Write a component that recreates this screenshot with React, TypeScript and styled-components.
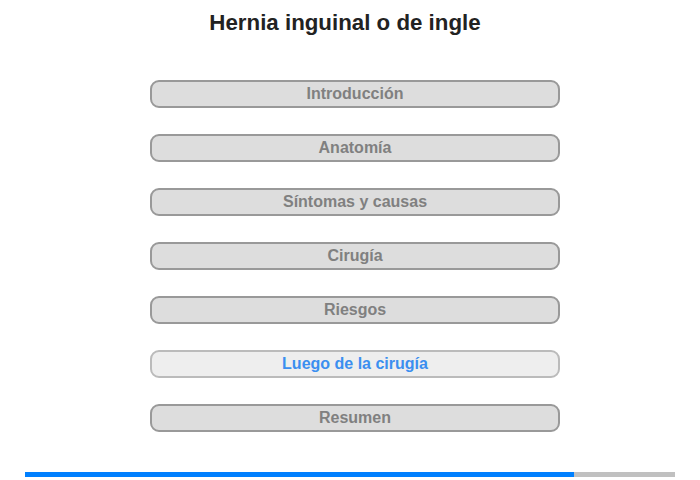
import styled, { createGlobalStyle } from 'styled-components';

const GlobalStyle = createGlobalStyle`
  html, body {
    margin: 0;
    padding: 0;
    background: #ffffff;
    font-family: "Liberation Sans", Arial, sans-serif;
  }
`;

const Page = styled.div`
  width: 700px;
  height: 480px;
  display: flex;
  flex-direction: column;
`;

const Title = styled.h1`
  margin: 10px 0 0 0;
  text-align: center;
  font-size: 22.3px;
  line-height: 26px;
  font-weight: 700;
  color: #222222;
  transform: translateX(-5px);
`;

const Menu = styled.nav`
  margin: 44px 0 0 150px;
  width: 410px;
  display: flex;
  flex-direction: column;
  gap: 26px;
`;

const MenuButton = styled.button<{ $active?: boolean }>`
  box-sizing: border-box;
  height: 28px;
  width: 100%;
  padding: 0;
  border-radius: 9px;
  border: 2px solid ${({ $active }) => ($active ? '#bbbbbb' : '#999999')};
  background: ${({ $active }) => ($active ? '#eeeeee' : '#dddddd')};
  color: ${({ $active }) => ($active ? '#3b8ff0' : '#808080')};
  font-family: "Liberation Sans", Arial, sans-serif;
  font-size: 16px;
  font-weight: 700;
  line-height: 24px;
  text-align: center;
  cursor: pointer;
`;

const Progress = styled.div`
  margin: auto 25px 3px 25px;
  height: 5px;
  background: #c0c0c0;
  display: flex;
`;

const ProgressFill = styled.div`
  height: 100%;
  background: #0080ff;
`;

const sections = [
  'Introducción',
  'Anatomía',
  'Síntomas y causas',
  'Cirugía',
  'Riesgos',
  'Luego de la cirugía',
  'Resumen',
];

const activeIndex = 5;
const progress = 549 / 650;

export default function App() {
  return (
    <>
      <GlobalStyle />
      <Page>
        <Title>Hernia inguinal o de ingle</Title>
        <Menu>
          {sections.map((label, i) => (
            <MenuButton key={label} $active={i === activeIndex}>
              {label}
            </MenuButton>
          ))}
        </Menu>
        <Progress>
          <ProgressFill style={{ width: `${progress * 100}%` }} />
        </Progress>
      </Page>
    </>
  );
}
